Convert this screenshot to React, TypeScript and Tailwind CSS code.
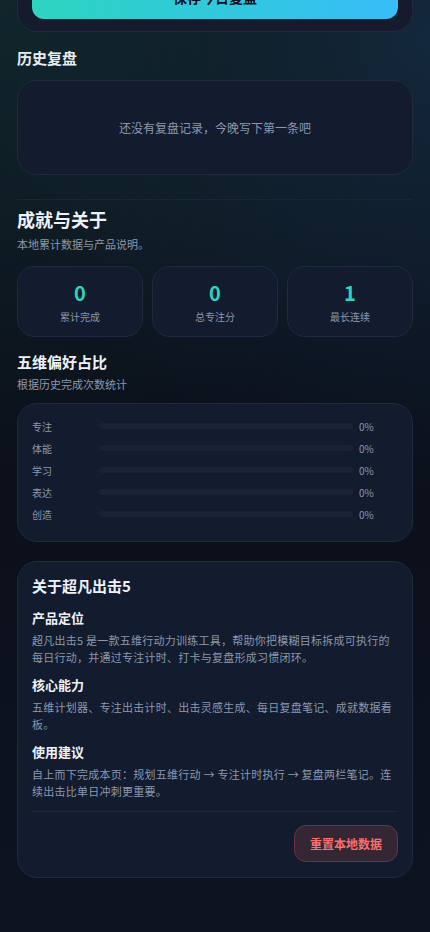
import React from "react";

const stats = [
  { value: 0, label: "累计完成" },
  { value: 0, label: "总专注分" },
  { value: 1, label: "最长连续" },
];

const prefs = ["专注", "体能", "学习", "表达", "创造"];

const about = [
  {
    title: "产品定位",
    body: "超凡出击5 是一款五维行动力训练工具，帮助你把模糊目标拆成可执行的每日行动，并通过专注计时、打卡与复盘形成习惯闭环。",
  },
  {
    title: "核心能力",
    body: "五维计划器、专注出击计时、出击灵感生成、每日复盘笔记、成就数据看板。",
  },
  {
    title: "使用建议",
    body: "自上而下完成本页：规划五维行动 → 专注计时执行 → 复盘两栏笔记。连续出击比单日冲刺更重要。",
  },
];

export default function App() {
  return (
    <div
      className="min-h-[932px] w-[430px] overflow-hidden bg-[#0c1220] bg-[radial-gradient(circle_at_0%_0%,#11262c_0%,transparent_45%),radial-gradient(circle_at_100%_4%,#13283d_0%,transparent_45%),linear-gradient(180deg,#0b111c_0%,#0b101b_60%,#0d1321_100%)] px-[17px] pb-[53px] text-white"
      style={{ fontFamily: '"Noto Sans CJK SC", "Noto Sans", sans-serif' }}
    >
      {/* 今日复盘卡片底部（页面已滚动） */}
      <div className="-mt-[46px] rounded-[20px] border border-[#1f2a40] bg-[#151a2d] px-[14px] pb-[12px] pt-[20px]">
        <button className="flex h-[44px] w-full items-center justify-center rounded-[12px] bg-gradient-to-r from-[#2dd4bf] to-[#38bdf8] text-[14px] font-bold text-[#0b1220]">
          保存今日复盘
        </button>
      </div>

      <h2 className="mt-[15px] text-[15px] font-bold leading-[22px] text-[#e8edf5]">历史复盘</h2>
      <div className="mt-[11px] flex h-[95px] items-center justify-center rounded-[20px] border border-[#1f2a40] bg-[#131b2e] text-[12px] text-[#8b98ad]">
        还没有复盘记录，今晚写下第一条吧
      </div>

      <div className="mt-[24px] h-px bg-[#1c2536]" />

      <h1 className="mt-[6px] text-[18px] font-bold leading-[26px] text-[#eef2f8]">成就与关于</h1>
      <p className="mt-[4px] text-[11px] leading-[16px] text-[#8b98ad]">本地累计数据与产品说明。</p>

      <div className="mt-[14px] grid grid-cols-3 gap-[9px]">
        {stats.map((s) => (
          <div
            key={s.label}
            className="flex h-[71px] flex-col items-center justify-center rounded-[18px] border border-[#1f2a40] bg-[#131b2e]"
          >
            <span className="text-[20px] font-bold leading-[28px] text-[#2dd4bf]">{s.value}</span>
            <span className="mt-[3px] text-[10px] leading-[14px] text-[#8b98ad]">{s.label}</span>
          </div>
        ))}
      </div>

      <h2 className="mt-[14px] text-[15px] font-bold leading-[22px] text-[#eef2f8]">五维偏好占比</h2>
      <p className="mt-[3px] text-[11px] leading-[16px] text-[#8b98ad]">根据历史完成次数统计</p>

      <div className="mt-[11px] flex flex-col gap-[6px] rounded-[20px] border border-[#1f2a40] bg-[#131b2e] px-[14px] pb-[19px] pt-[14px]">
        {prefs.map((p) => (
          <div key={p} className="flex h-[16px] items-center">
            <span className="w-[67px] text-[10px] text-[#8b98ad]">{p}</span>
            <div className="h-[6px] flex-1 rounded-full bg-[#1a2336]" />
            <span className="w-[45px] pl-[6px] text-[10px] text-[#8b98ad]">0%</span>
          </div>
        ))}
      </div>

      <div className="mt-[19px] rounded-[20px] border border-[#1f2a40] bg-[#131b2e] px-[14px] pb-[15px] pt-[14px]">
        <h3 className="text-[15px] font-bold leading-[20px] text-[#eef2f8]">关于超凡出击5</h3>
        <div className="mt-[13px] flex flex-col gap-[10px]">
          {about.map((a) => (
            <div key={a.title}>
              <h4 className="text-[13px] font-bold leading-[18px] text-[#eef2f8]">{a.title}</h4>
              <p className="mt-[5px] text-[11px] leading-[17px] tracking-[0.25px] text-[#8b98ad]">{a.body}</p>
            </div>
          ))}
        </div>
        <div className="mt-[11px] h-px bg-[#1f2838]" />
        <div className="mt-[13px] flex justify-end">
          <button className="h-[37px] rounded-[12px] border border-[#6b3341] bg-[#352634] px-[15px] text-[12px] font-bold text-[#f87171]">
            重置本地数据
          </button>
        </div>
      </div>
    </div>
  );
}
